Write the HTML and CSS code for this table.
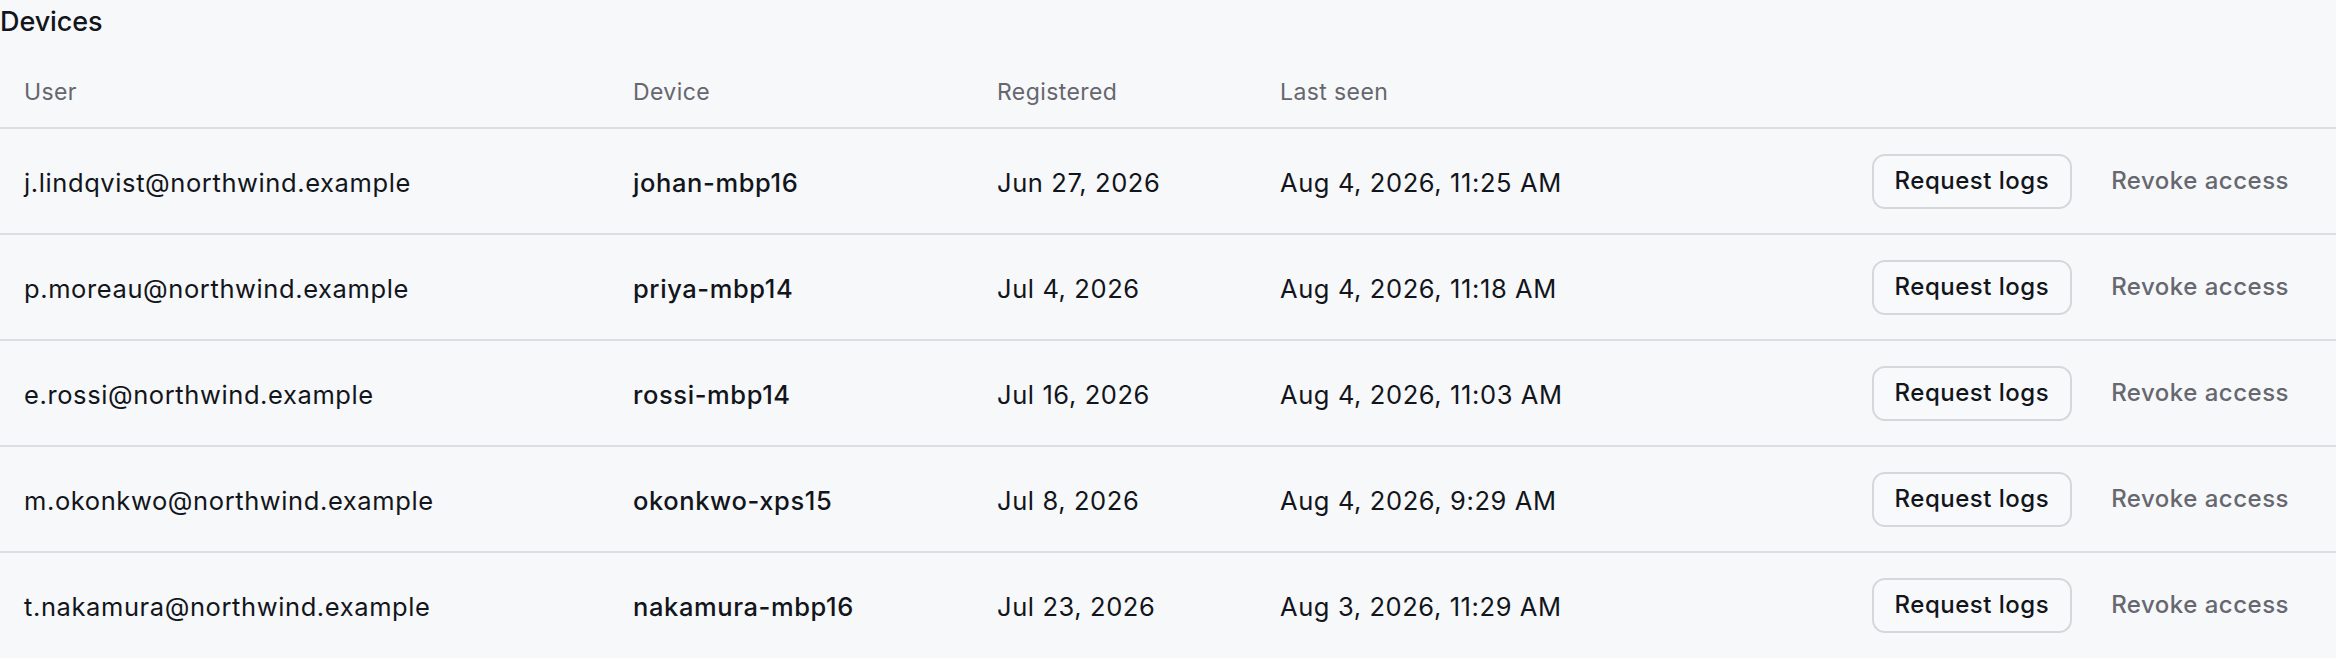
FILE: index.html
```html
<!DOCTYPE html>
<html lang="en">
<head>
<meta charset="utf-8">
<title>Devices</title>
<link rel="stylesheet" href="styles.css">
</head>
<body>
<section class="devices">
  <h2 class="title">Devices</h2>
  <div class="table">
    <div class="row head">
      <div class="cell">User</div>
      <div class="cell">Device</div>
      <div class="cell">Registered</div>
      <div class="cell">Last seen</div>
      <div class="cell"></div>
    </div>
    <div class="row">
      <div class="cell">j.lindqvist@northwind.example</div>
      <div class="cell device">johan-mbp16</div>
      <div class="cell">Jun 27, 2026</div>
      <div class="cell">Aug 4, 2026, 11:25 AM</div>
      <div class="cell actions"><button class="btn">Request logs</button><button class="link">Revoke access</button></div>
    </div>
    <div class="row">
      <div class="cell">p.moreau@northwind.example</div>
      <div class="cell device">priya-mbp14</div>
      <div class="cell">Jul 4, 2026</div>
      <div class="cell">Aug 4, 2026, 11:18 AM</div>
      <div class="cell actions"><button class="btn">Request logs</button><button class="link">Revoke access</button></div>
    </div>
    <div class="row">
      <div class="cell">e.rossi@northwind.example</div>
      <div class="cell device">rossi-mbp14</div>
      <div class="cell">Jul 16, 2026</div>
      <div class="cell">Aug 4, 2026, 11:03 AM</div>
      <div class="cell actions"><button class="btn">Request logs</button><button class="link">Revoke access</button></div>
    </div>
    <div class="row">
      <div class="cell">m.okonkwo@northwind.example</div>
      <div class="cell device">okonkwo-xps15</div>
      <div class="cell">Jul 8, 2026</div>
      <div class="cell">Aug 4, 2026, 9:29 AM</div>
      <div class="cell actions"><button class="btn">Request logs</button><button class="link">Revoke access</button></div>
    </div>
    <div class="row">
      <div class="cell">t.nakamura@northwind.example</div>
      <div class="cell device">nakamura-mbp16</div>
      <div class="cell">Jul 23, 2026</div>
      <div class="cell">Aug 3, 2026, 11:29 AM</div>
      <div class="cell actions"><button class="btn">Request logs</button><button class="link">Revoke access</button></div>
    </div>
  </div>
</section>
</body>
</html>
```
FILE: styles.css
```css
html, body {
  margin: 0;
  padding: 0;
  background: #f7f8fa;
}
body {
  font-family: Inter, "Liberation Sans", sans-serif;
  color: #12151b;
  overflow: hidden;
}
.title {
  margin: 0;
  padding-top: 2px;
  font-size: 27px;
  line-height: 40px;
  font-weight: 500;
  letter-spacing: -0.1px;
}
.row {
  display: grid;
  grid-template-columns: 609px 364px 283px 1fr auto;
  align-items: center;
  border-bottom: 2px solid #dcdde1;
  height: 104px;
}
.row.head {
  height: 85px;
  align-items: start;
}
.row:last-child {
  border-bottom: none;
}
.cell {
  padding: 4px 24px 0;
  font-size: 25.5px;
  line-height: 32px;
  letter-spacing: 0.6px;
  white-space: nowrap;
}
.head .cell {
  color: #65666e;
  font-size: 23px;
  letter-spacing: 0.4px;
  padding-top: 34px;
}
.device {
  font-weight: 500;
}
.actions {
  display: flex;
  align-items: center;
  gap: 16px;
  padding-top: 0;
}
.btn, .link {
  font-family: inherit;
  font-size: 24px;
  font-weight: 500;
  letter-spacing: 0.5px;
  line-height: 32px;
  height: 55px;
  padding: 0 21px;
  border-radius: 13px;
  cursor: pointer;
}
.btn {
  background: #f8f9fa;
  color: #12151b;
  border: 2px solid #d6d7db;
}
.link {
  background: transparent;
  border: 2px solid transparent;
  color: #66676f;
}
```
